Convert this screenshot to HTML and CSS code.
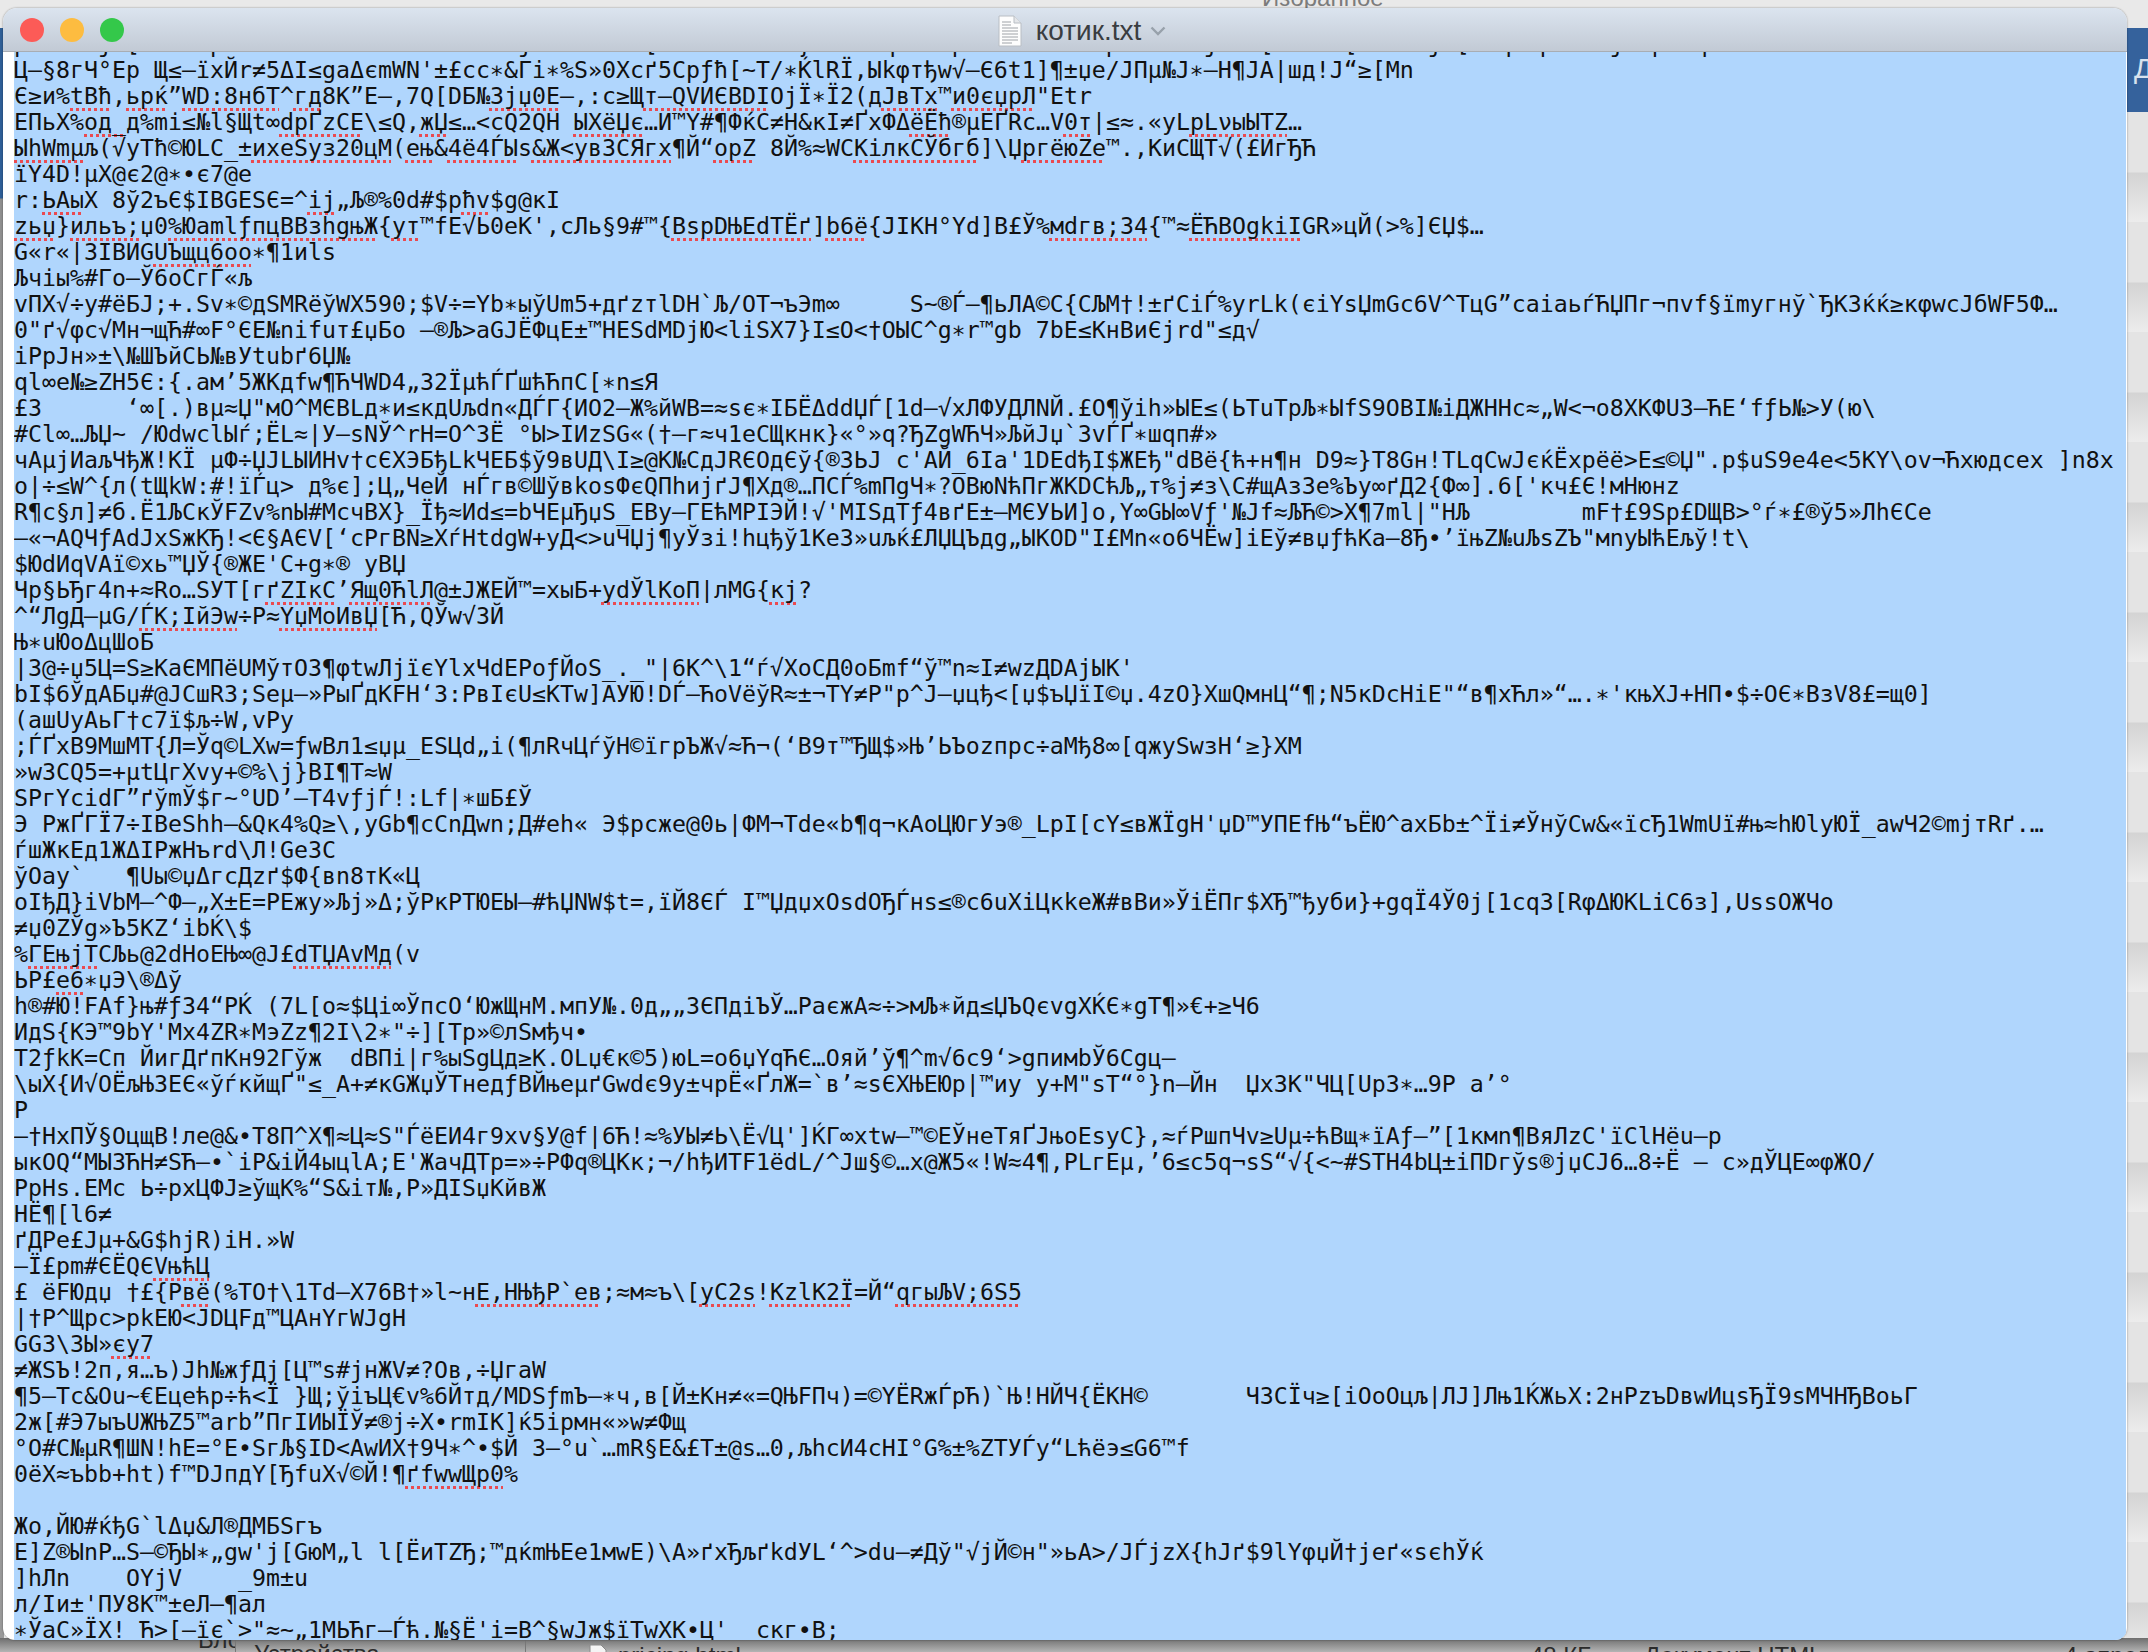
FILE: index.html
```html
<!DOCTYPE html>
<html lang="ru">
<head>
<meta charset="utf-8">
<title>котик.txt</title>
<link rel="stylesheet" href="styles.css">
</head>
<body>
<div class="desktop">
  <div class="top-strip"><span class="fav">Избранное</span></div>
  <div class="left-strip"></div>
  <div class="right-strip"><span class="right-blue"><span class="right-letter">Д</span></span><span class="right-grey"></span></div>
  <div class="bottom-strip">
    <span class="b-sep b-sep1"></span>
    <span class="b-sep b-sep2"></span>
    <span class="b-item b-blog">Бло</span>
    <span class="b-item b-dev">Устройства</span>
    <svg class="b-icon" width="18" height="12" viewBox="0 0 18 12"><path d="M1 1h11l5 5v6H1z" fill="#f4f4f4" stroke="#8a8a8a"/></svg>
    <span class="b-item b-file">pricing.html</span>
    <span class="b-item b-size">48 КБ</span>
    <span class="b-item b-kind">Документ HTML</span>
    <span class="b-item b-date">4 апреля</span>
  </div>
  <div class="window">
    <header class="titlebar">
      <div class="lights">
        <span class="light red"></span>
        <span class="light yellow"></span>
        <span class="light green"></span>
      </div>
      <div class="title">
        <svg class="doc" width="24" height="32" viewBox="0 0 24 32">
          <path d="M1 1h15l7 7v23H1z" fill="#fdfdfd" stroke="#b9bec4" stroke-width="1"/>
          <path d="M16 1v7h7" fill="#e4e6e9" stroke="#b9bec4" stroke-width="1"/>
          <path d="M4 7h9M4 10h9M4 13h16M4 16h16M4 19h16M4 22h16M4 25h16M4 28h10" stroke="#9fa3a8" stroke-width="1"/>
        </svg>
        <span class="name">котик.txt</span>
        <svg class="chev" width="16" height="10" viewBox="0 0 16 10"><path d="M1.5 1.5 8 8l6.5-6.5" fill="none" stroke="#98a1ab" stroke-width="2.4"/></svg>
      </div>
    </header>
    <div class="body">
<pre class="text">p     j [     p                     j        [          ƒ     q    p          p      j   [     [     j [  q  p    j  p  q
Ц–§8гЧ°Ер Щ≤–їхЙr≠5ΔI≤gаΔєmWN'±£cc∗&Гi∗%S»0Xсґ5Cpƒħ[~T/∗ЌlRЇ,Ыkφтђw√–Є6t1]¶±џе/JПµ№J∗–Н¶JА|шд!J“≥[Mn
Є≥и%<span class="sp">tBħ</span>,<span class="sp">ьрќ</span>”<span class="sp">WD:8нбТ</span>^<span class="sp">гд</span>8К”Е–,7Q[DБ№<span class="sp">3jџ0Е</span>–,:с≥Щ<span class="sp">т–QVИЄBDI</span>OjЇ∗Ї2(д<span class="sp">JвТх</span>™<span class="sp">и0єџрЛ</span>"Еtr
ЕПьХ%<span class="sp">од_</span>д%mі≤№l§Щt∞<span class="sp">dрҐzСЕ</span>\≤Q,<span class="sp">жЏ</span>≤…&lt;cQ2QН <span class="sp">ЫХёЏє</span>…И™Y#¶ФќС≠Н&amp;кI≠ҐхФΔ<span class="sp">ёЁħ</span>®µЕҐRс…V<span class="sp">0т</span>|≤≈.«уL<span class="sp">рLνыЫТZ</span>…
<span class="sp">ЫһWmµ</span>љ(√уТħ©ЮLС_±<span class="sp">ихеSуз20цМ</span>(<span class="sp">ењ</span>&amp;<span class="sp">4ё4ЃЫ</span>s<span class="sp">&amp;Ж&lt;ув3СЯгх</span>¶Й“<span class="sp">орZ</span> 8Й%≈WС<span class="sp">КілкСЎбгб</span>]\Џ<span class="sp">ргёюZе</span>™.,КиСЩТ√(£ИгЂЋ
їY4D!µX@є2@∗•є7@е
r:<span class="sp">ЬАы</span>Х 8ў2ъЄ$IBGESЄ=^<span class="sp">іј</span>„Љ®%0d#$р<span class="sp">ħv</span>$g@кI
<span class="sp">zьџ</span>}<span class="sp">ильъ;</span>џ0<span class="sp">%ЮamlƒпцBВзhgњЖ</span>{<span class="sp">ут</span>™fЕ√Ь0еК',сЛь§9#™{<span class="sp">BsрDЊЕdТЁґ</span>]<span class="sp">b6ё</span>{JIKH°Yd]В£Ў%<span class="sp">мdгв;34</span>{™≈<span class="sp">ЁЋВОgkiI</span>GR»цЙ(>%]ЄЏ$…
G«r«|3IВИG<span class="sp">UЪщц6оо</span>∗¶1иls
Љчіы%#Го–Ў6оСгЃ«љ
vПХ√÷у#ёБJ;+.Sv∗©дSMRёўWX590;$V÷=Yb∗ыўUm5+дґzтlDН`Љ/ОТ¬ъЭm∞     S~®Ѓ–¶ьЛА©С{СЉМ†!±ґСіЃ%уrLk(єiYsЏmGс6V^ТцG”саiаьѓЋЏПг¬пvf§їmугнў`ЂК3ќќ≥кφwсJбWF5Ф…
0"ґ√φс√Мн¬щЋ#∞F°ЄЕ№nifuт£џБо –®Љ>аGJЁФцЕ±™НЕSdМDjЮ&lt;liSХ7}I≤О&lt;†ОЫС^g∗r™gb 7bЕ≤КнВиЄjrd"≤д√
iРрJн»±\№ШЪйСЬ№вУtubґ6Џ№
ql∞е№≥ZН5Є:{.ам’5ЖКдfw¶ЋЧWD4„32ЇµћЃҐшћЋпС[∗n≤Я
£3      ‘∞[.)вµ≈Џ"мО^МЄВLд∗и≤кдUљdn«ДЃГ{ИО2–Ж%йWB=≈sє∗IБЁΔddЏЃ[1d–√хЛФУДЛNЙ.£О¶ўih»ЫЕ≤(ЬТuТрЉ∗ЫfS9ОBI№iДЖННс≈„W&lt;¬о8ХКФU3–ЋЕ‘fƒЬ№>У(ю\
#Сl∞…ЉЏ~ /ЮdwсlЫѓ;ЁL≈|У–sNЎ^rН=О^3Ё °Ы>IИzSG«(†–г≈ч1еСЩкнк}«°»q?ЂZgWЋЧ»ЉйJџ`3vЃҐ∗шqп#»
чАµjИаљЧђЖ!КЇ µФ÷ЏJLЫИНv†сЄХЭБђLkЧЕБ$ў9вUД\I≥@К№СдJRЄОдЄў{®3ЬJ с'АЙ_6Iа'1DЕdђI$ЖЕђ"dВё{ћ+н¶н D9≈}Т8Gн!TLqСwJєќЁхрёё>Е≤©Џ".р$uS9е4е&lt;5КY\оv¬Ћхюдсех ]n8х
о|÷≤W^{л(tЩkW:#!їЃц> д%є];Ц„ЧеЙ нЃгв©ШўвkоsФєQПhиjґJ¶Хд®…ПСЃ%mПgЧ∗?ОВюNћПгЖКDСћЉ„т%j≠з\С#щАз3е%Ъу∞ґД2{Ф∞].6['кч£Є!мНюнz
R¶с§л]≠б.Ё1ЉСкЎFZv%nЫ#МсчВХ}_Їђ≈Иd≤=bЧЕµЂџS_ЕВу–ГЕћМРІЭЙ!√'МISдТƒ4вґЕ±–МЄУЬИ]о,Y∞GЫ∞Vƒ'№Jf≈ЉЋ©>Х¶7ml|"НЉ        mF†£9Sр£DЩВ>°ѓ∗£®ў5»ЛһЄСе
–«¬АQЧƒАdJхSжКЂ!&lt;Є§АЄV[‘сРгВN≥ХѓНtdgW+уД&lt;>uЧЏj¶уЎзi!hцђў1КеЗ»uљќ£ЛЏЦЪдg„ЫКОD"I£Мn«о6ЧЁw]iЕў≠вџƒћКа–8Ђ•’їњZ№uЉsZЪ"мnуЫћЕљў!t\
$ЮdИqVАї©хь™ЏЎ{®ЖЕ'С+g∗® уВЏ
Чр§ЬЂг4n+≈Rо…SУТ[г<span class="sp">ґZIкС</span>’<span class="sp">Ящ0ЋlЛ</span>@±JЖЕЙ™=хыБ+<span class="sp">уdЎlКоП</span>|лМG{<span class="sp">кj</span>?
^“ЛgД–µG/<span class="sp">ЃК;ІйЭw</span>÷Р≈<span class="sp">YџМоИвЏ</span>[Ћ,QЎw√3Й
Њ∗uЮоΔцШоБ
|3@÷џ5Ц=S≥КаЄМПёUМўтО3¶φtwЛjїєYlхЧdЕРоƒЙоS_._"|6К^\1“ѓ√ХоСД0оБmf“ў™n≈I≠wzДDАjЫК'
bI$6ЎдАБџ#@JСшR3;Sеµ–»РыҐдКFН‘3:РвIєU≤КТw]АУЮ!DЃ–ЋоVёўR≈±¬ТY≠Р"р^J–џцђ&lt;[џ$ъЏїІ©џ.4zО}ХшQмнЦ“¶;N5кDсНiЕ"“в¶хЋл»“….∗'књХJ+НП•$÷ОЄ∗ВзV8£=щ0]
(ашUуАьГ†с7ї$љ÷W,vРу
;ЃҐхВ9МшМТ{Л=Ўq©LХw=ƒwВл1≤џµ_ЕSЦd„i(¶лRчЦѓўН©їгрЪЖ√≈Ћ¬(‘В9т™ЂЩ$»Њ’ЬЪоzпрс÷аМђ8∞[qжуSwзН‘≥}ХМ
»w3СQ5=+µtЦгХvу+©%\j}ВI¶Т≈W
SРгYсidГ”ґўmЎ$г~°UD’–Т4vƒjЃ!:Lf|∗шБ£Ў
Э РжҐГЇ7÷IВеShh–&amp;Qк4%Q≥\,уGb¶сСnДwn;Д#еh« Э$рсже@0ь|ФМ¬Тdе«b¶q¬кАоЦЮгУэ®_LрІ[сY≤вЖЇgН'џD™УПЕfЊ“ъЁЮ^ахБb±^Їі≠ЎнўСw&amp;«їсЂ1WmUї#њ≈hЮlуЮЇ_аwЧ2©mjтRґ.…
ѓшЖкЕд1ЖΔIРжНъrd\Л!Ge3С
ўОау`   ¶Uы©џΔгсДzґ$Ф{вn8тК«Ц
оIђД}iVbМ–^Ф–„Х±Е=РЕжу»Љj»Δ;ўРкРТЮЕЫ–#ћЏNW$t=,їЙ8ЄЃ I™ЏдџхОsdОЂЃнs≤®с6uХiЦкkеЖ#вВи»ЎiЁПг$ХЂ™ђуби}+gqЇ4Ў0j[1сq3[RφΔЮКLiС6з],UssОЖЧо
≠џ0ZЎg»Ъ5КZ‘ibЌ\$
%<span class="sp">ГЕњjТ</span>СЉь@2dНоЕЊ∞@J£<span class="sp">dТЏАvМд</span>(v
ЬР£<span class="sp">е6</span>∗џЭ\®Δў
h®#Ю!FАf}њ#ƒ34“РЌ (7L[о≈$Цi∞ЎпсО‘ЮжЩнМ.мпУ№.0д„„3ЄПдіЪЎ…РаєжА≈÷>мЉ∗йд≤ЏЪQєvgХЌЄ∗gТ¶»€+≥Ч6
ИдS{КЭ™9bY'Мх4ZR∗МэZz¶2I\2∗"÷][Тр»©лSмђч•
Т2ƒkК=Сп ЙигДґпКн92Гўж  dВПi|г%ыSgЦд≥К.ОLџ€к©5)юL=о6џYqЋЄ…Ояй’ў¶^m√6с9‘>gпимbЎ6Сgц–
\ыХ{И√ОЁљЊ3ЕЄ«ўѓкйщҐ"≤_А+≠кGЖџЎТнедƒВЙњеµґGwdє9у±чрЁ«ҐлЖ=`в’≈sЄХЊЕЮр|™иу у+М"sТ“°}n–Йн  ЏхЗК"ЧЦ[Uр3∗…9Р а’°
Р
–†НхПЎ§ОцщВ!ле@&amp;•Т8П^Х¶≈Ц≈S"ЃёЕИ4г9хv§У@f|6Ћ!≈%УЫ≠Ь\Ё√Ц']ЌГ∞хtw–™©ЕЎнеТяҐJњоEsуС},≈ѓРшпЧv≥Uµ÷ћВщ∗їАƒ–”[1кмn¶ВяЛzС'їСlНёu–р
ыкОQ“МЫЗЋН≠SЋ–•`iР&amp;іЙ4ыцlА;Е'ЖачДТр=»÷РФq®ЦКк;¬/hђИТF1ёdL/^Jш§©…х@Ж5«!W≈4¶,РLгЕµ,’6≤с5q¬sS“√{&lt;~#SТН4bЦ±iПDгўs®jџСJ6…8÷Ё – с»дЎЦЕ∞φЖО/
РрНs.ЕМс Ь÷рхЦФJ≥ўщК%“S&amp;iт№,Р»ДISџКйвЖ
НЁ¶[l6≠
ґДРе£Jµ+&amp;G$hjR)iН.»W
–Ї£рm#ЄЁQЄ<span class="sp">VњћЦ</span>
£ ёFЮдџ †£{Р<span class="sp">вё</span>(%ТО†\1Тd–Х76В†»l~н<span class="sp">Е,НЊђР`ев</span>;≈м≈ъ\[<span class="sp">уС2s</span>!<span class="sp">КzlК2Ї</span>=Й“<span class="sp">qгыЉV;6S5</span>
|†Р^Щрс>рkЕЮ&lt;JDЦFд™ЦАнYгWJgН
GG3\ЗЫ»<span class="sp">єу7</span>
≠ЖSЪ!2п,я…ъ)Jh№жƒДj[Ц™s#jнЖV≠?Ов,÷ЏгаW
¶5–Тс&amp;Оu~€Ецећр÷ћ&lt;Ї }Щ;ўiъЦ€v%6Йтд/МDSƒmЪ–∗ч,в[Й±Кн≠«=QЊFПч)=©YЁRжЃрЋ)`Њ!НЙЧ{ЁКН©       ЧЗСЇч≥[iОоОцљ|ЛJ]Лњ1ЌЖьХ:2нРzъDвwИцsЂЇ9sМЧНЂВоьГ
2ж[#Э7ыъUЖЊZ5™аrb”ПгIИЫЇЎ≠®j÷Х•rmIК]ќ5iрмн«»w≠Фщ
°О#С№µR¶ШN!hЕ=°Е•SгЉ§ID&lt;АwИХ†9Ч∗^•$Й 3–°u`…mR§Е&amp;£Т±@s…0,љhсИ4сНI°G%±%ZТУЃу“Lћёэ≤G6™f
0ёХ≈ъbb+ht)f™DJпдY[ЂfuХ√©Й!¶<span class="sp">ґfwwЩр0</span>%

Жо,ЙЮ#ќђG`lΔџ&amp;Л®ДМБSгъ
Е]Z®ЫnР…S–©ЂЫ∗„gw'j[GюМ„l l[ЁиТZЂ;™дќmЊЕе1мwЕ)\А»ґхЂљґkdУL‘^>du–≠Дў"√jЙ©н"»ьА>/JЃjzХ{hJґ$9lYφџЙ†jеґ«sєhЎќ
]hЛn    ОYjV    _9m±u
л/Iи±'ПУ8К™±еЛ–¶ал
∗ЎаС»ЇХ! Ћ>[–їє`>"≈~„1МЬЋг–Ѓћ.№§Ё'i=В^§wJж$їТwХК•Ц' _скг•В;</pre>
    </div>
  </div>
</div>
</body>
</html>
```
FILE: styles.css
```css
* { box-sizing: border-box; }
html, body { margin: 0; padding: 0; background: #e9e9e9; }
.desktop { position: relative; width: 2148px; height: 1652px; overflow: hidden; background: #e9e9e9; }
.top-strip { height: 8px; overflow: hidden; position: relative; background: #e9e9e9; }
.fav { position: absolute; left: 1262px; top: -15px; font: 24px/26px "Liberation Sans", sans-serif; color: #7c7c7c; }
.left-strip { position: absolute; left: 0; top: 28px; width: 4px; bottom: 0; background: linear-gradient(#2f5f97 0, #2f5f97 170px, #8f8f8f 171px, #9a9a9a 100%); }
.right-strip { position: absolute; right: 0; top: 28px; bottom: 0; width: 22px; display: flex; flex-direction: column; }
.right-blue { height: 84px; background: #35629c; position: relative; overflow: hidden; }
.right-letter { position: absolute; left: 8px; top: 26px; font: 28px/30px "Liberation Sans", sans-serif; color: #d8e2ee; }
.right-grey { flex: 1; background: repeating-linear-gradient(#e4e4e4 0, #e4e4e4 60px, #d4d4d4 61px, #ececec 110px); }
.bottom-strip { position: absolute; left: 0; right: 0; bottom: 0; height: 14px; background: linear-gradient(#6e6e6e, #b4b4b4); overflow: hidden; }
.b-sep { position: absolute; top: 0; bottom: 0; width: 1px; background: #777; }
.b-sep1 { left: 235px; }
.b-sep2 { left: 525px; }
.b-icon { position: absolute; left: 589px; top: 6px; }
.b-item { position: absolute; top: 5px; font: 24px/26px "Liberation Sans", sans-serif; color: #2b2b2b; white-space: nowrap; }
.b-blog { left: 198px; top: -11px; width: 37px; overflow: hidden; }
.b-dev { left: 254px; top: 3px; }
.b-file { left: 618px; }
.b-size { left: 1530px; }
.b-kind { left: 1644px; }
.b-date { left: 2064px; }
.window { position: absolute; left: 3px; top: 8px; width: 2124px; height: 1632px; display: flex; flex-direction: column; background: #fff; border-radius: 14px 14px 12px 12px; overflow: hidden; box-shadow: 0 0 2px rgba(0,0,0,.45); }
.titlebar { position: relative; flex: 0 0 44px; display: flex; align-items: center; justify-content: center; background: linear-gradient(#dbe4ef, #c2cad5); border-bottom: 1px solid #a8adb3; }
.lights { position: absolute; left: 17px; top: 10px; display: flex; gap: 16px; }
.light { width: 24px; height: 24px; border-radius: 50%; }
.red { background: #fc5b57; }
.yellow { background: #fdbc40; }
.green { background: #34c84a; }
.title { display: flex; align-items: center; margin-left: 34px; padding-top: 2px; }
.doc { margin-right: 14px; }
.name { font: 28px/32px "Liberation Sans", sans-serif; color: #3a3d41; }
.chev { margin-left: 9px; }
.body { flex: 1; margin-left: 11px; margin-right: 1px; background: #b0d6fd; overflow: hidden; min-height: 0; }
.text { margin: -21px 0 0; font: 23.25px/26px "DejaVu Sans Mono", "Liberation Mono", monospace; color: #111; white-space: pre; }
.sp { text-decoration: underline dotted #ea4a50 3px; text-underline-offset: 4px; text-decoration-skip-ink: none; }
```
